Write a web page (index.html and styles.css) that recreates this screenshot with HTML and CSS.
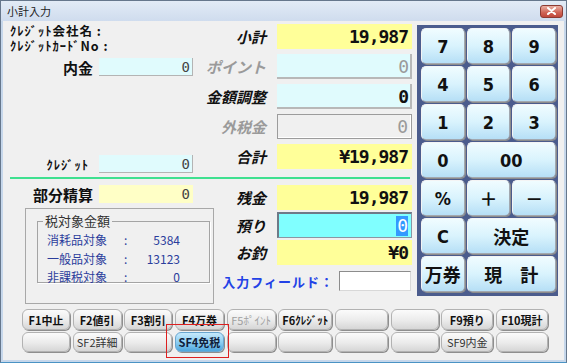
FILE: index.html
```html
<!DOCTYPE html>
<html lang="ja">

<head>
    <meta charset="UTF-8">
    <title>小計入力</title>
    <link rel="stylesheet" href="styles.css">
</head>

<body>
    <div class="window">
        <div class="titlebar">
            <span class="title">小計入力</span>
            <span class="close">
                <svg width="11" height="8" viewBox="0 0 11 8">
                    <path d="M2 1 L9 7 M9 1 L2 7" stroke="#fff" stroke-width="2" stroke-linecap="round" />
                </svg>
            </span>
        </div>

        <div class="client">
            <div class="main">
                <div class="entry">
                    <!-- upper part: subtotal side -->
                    <div class="upper">
                        <div class="left-col">
                            <div class="credit-info">
                                <div>ｸﾚｼﾞｯﾄ会社名 :</div>
                                <div>ｸﾚｼﾞｯﾄｶｰﾄﾞNo :</div>
                            </div>
                            <div class="lrow">
                                <span class="llabel">内金</span>
                                <span class="lfield cyan">0</span>
                            </div>
                            <div class="lrow push-down">
                                <span class="llabel small">ｸﾚｼﾞｯﾄ</span>
                                <span class="lfield cyan">0</span>
                            </div>
                        </div>
                        <div class="right-col">
                            <div class="row">
                                <span class="label">小計</span>
                                <span class="field yellow">19,987</span>
                            </div>
                            <div class="row">
                                <span class="label dim">ポイント</span>
                                <span class="field cyan dim-val">0</span>
                            </div>
                            <div class="row">
                                <span class="label">金額調整</span>
                                <span class="field cyan">0</span>
                            </div>
                            <div class="row">
                                <span class="label dim">外税金</span>
                                <span class="field sunken dim-val">0</span>
                            </div>
                            <div class="row">
                                <span class="label">合計</span>
                                <span class="field yellow">¥19,987</span>
                            </div>
                        </div>
                    </div>

                    <div class="rule"></div>

                    <!-- lower part: payment side -->
                    <div class="lower">
                        <div class="left-col">
                            <div class="lrow">
                                <span class="llabel">部分精算</span>
                                <span class="lfield pale">0</span>
                            </div>
                            <div class="tax-panel">
                                <fieldset class="tax-box">
                                    <legend>税対象金額</legend>
                                    <div class="tax-row"><span>消耗品対象</span><span>:</span><span class="num">5384</span></div>
                                    <div class="tax-row"><span>一般品対象</span><span>:</span><span class="num">13123</span></div>
                                    <div class="tax-row"><span>非課税対象</span><span>:</span><span class="num">0</span></div>
                                </fieldset>
                            </div>
                        </div>
                        <div class="right-col pay">
                            <div class="row">
                                <span class="label">残金</span>
                                <span class="field yellow">19,987</span>
                            </div>
                            <div class="row tall">
                                <span class="label">預り</span>
                                <span class="field deposit"><span class="selected">0</span></span>
                            </div>
                            <div class="row">
                                <span class="label">お釣</span>
                                <span class="field yellow">¥0</span>
                            </div>
                            <div class="input-row">
                                <span class="input-label">入力フィールド：</span>
                                <input type="text" class="input-field">
                            </div>
                        </div>
                    </div>
                </div>

                <div class="keypad">
                    <button class="key">7</button>
                    <button class="key">8</button>
                    <button class="key">9</button>
                    <button class="key">4</button>
                    <button class="key">5</button>
                    <button class="key">6</button>
                    <button class="key">1</button>
                    <button class="key">2</button>
                    <button class="key">3</button>
                    <button class="key">0</button>
                    <button class="key wide">00</button>
                    <button class="key">%</button>
                    <button class="key">＋</button>
                    <button class="key">－</button>
                    <button class="key">C</button>
                    <button class="key wide">決定</button>
                    <button class="key">万券</button>
                    <button class="key wide">現　計</button>
                </div>
            </div>

            <div class="fkeys">
                <button class="fkey">F1中止</button>
                <button class="fkey">F2値引</button>
                <button class="fkey">F3割引</button>
                <button class="fkey">F4万券</button>
                <button class="fkey off">F5ﾎﾟｲﾝﾄ</button>
                <button class="fkey">F6ｸﾚｼﾞｯﾄ</button>
                <button class="fkey"></button>
                <button class="fkey"></button>
                <button class="fkey">F9預り</button>
                <button class="fkey">F10現計</button>

                <button class="fkey"></button>
                <button class="fkey light">SF2詳細</button>
                <button class="fkey"></button>
                <button class="fkey active">SF4免税</button>
                <button class="fkey"></button>
                <button class="fkey"></button>
                <button class="fkey"></button>
                <button class="fkey"></button>
                <button class="fkey light">SF9内金</button>
                <button class="fkey"></button>

                <div class="highlight"></div>
            </div>
        </div>
    </div>
</body>

</html>
```

FILE: styles.css
```css
/* window frame */
body {
    margin: 0;
    font-family: "Noto Sans CJK JP", sans-serif;
    background-color: #fff;
}

.window {
    width: 567px;
    height: 363px;
    box-sizing: border-box;
    border: 1px solid #66778c;
    border-bottom-color: #4a93c4;
    background-color: #c6d7eb;
    padding: 0 2px 2px;
    display: flex;
    flex-direction: column;
}

.titlebar {
    height: 20px;
    margin: 0 -2px;
    padding: 0 3px 0 6px;
    display: flex;
    align-items: center;
    background: linear-gradient(#e2ebf6, #cfdcee);
}

.title {
    font-size: 11px;
    color: #1e1e1e;
}

.close {
    margin-left: auto;
    width: 21px;
    height: 11px;
    border: 1px solid #8c3b33;
    border-radius: 3px;
    background: linear-gradient(#eab0a4, #cf6355 60%, #c0483c);
    display: flex;
    align-items: center;
    justify-content: center;
}

.client {
    flex: 1;
    background-color: #f0f0f0;
    padding: 3px 0 0 7px;
}

.main {
    display: flex;
}

.entry {
    width: 402px;
}

/* upper / lower grids */
.upper {
    display: grid;
    grid-template-columns: 190px 212px;
    height: 149px;
}

.lower {
    display: grid;
    grid-template-columns: 204px 198px;
}

.left-col {
    display: flex;
    flex-direction: column;
}

.credit-info {
    font-size: 12.5px;
    font-weight: bold;
    letter-spacing: 1px;
    line-height: 15px;
    margin-top: -1px;
    color: #111;
}

.lrow {
    display: flex;
    align-items: center;
    height: 18px;
    margin-top: 5px;
}

.lower .lrow {
    margin-top: 0;
}

.push-down {
    margin-top: auto;
}

.llabel {
    width: 83px;
    text-align: right;
    font-size: 15px;
    font-weight: bold;
    color: #111;
}

.llabel.small {
    font-size: 12.5px;
    letter-spacing: 1px;
    padding-right: 4px;
    box-sizing: border-box;
}

.lfield {
    margin-left: 6px;
    width: 94px;
    height: 18px;
    box-sizing: border-box;
    padding-right: 3px;
    text-align: right;
    font-family: "DejaVu Sans Mono", monospace;
    font-size: 14px;
    line-height: 18px;
    color: #444;
}

.lfield.cyan {
    box-shadow: inset -1px -1px 0 #b4b4b4;
}

.right-col {
    display: flex;
    flex-direction: column;
    gap: 5px;
}

.right-col.pay {
    gap: 2px;
}

.row {
    display: grid;
    grid-template-columns: 1fr 135px;
    column-gap: 11px;
    height: 25px;
}

.row.tall {
    height: 26px;
}

.label {
    display: flex;
    align-items: center;
    justify-content: flex-end;
    font-size: 15px;
    font-weight: bold;
    font-style: italic;
    color: #111;
    white-space: nowrap;
}

.label.dim {
    color: #9a9a9a;
}

.field {
    display: flex;
    align-items: center;
    justify-content: flex-end;
    box-sizing: border-box;
    padding-right: 4px;
    font-family: "DejaVu Sans Mono", monospace;
    font-weight: bold;
    font-size: 18px;
    letter-spacing: -1px;
    color: #111;
}

.yellow {
    background-color: #ffff99;
}

.cyan {
    background-color: #e0fbfd;
}

.pale {
    background-color: #ffffc6;
}

.field.cyan {
    box-shadow: inset -2px -2px 0 #b8b8b8;
}

.sunken {
    background-color: #f0f0f0;
    border: 1px solid #9c9c9c;
    box-shadow: inset -1px -1px 0 #fff;
}

.dim-val {
    color: #9a9a9a;
    font-weight: normal;
}

.deposit {
    background-color: #80ffff;
    border: 1px solid #8a96a4;
    border-top: 2px solid #6e7a88;
    border-left: 2px solid #6e7a88;
    padding-right: 3px;
}

.selected {
    background-color: #3399ff;
    color: #fff;
    font-weight: normal;
    padding: 0 1px;
    line-height: 20px;
}

.rule {
    height: 2px;
    margin: 4px 2px 6px 0;
    background-color: #3fe090;
}

/* tax box */
.tax-panel {
    margin: 5px 0 0 15px;
    width: 189px;
    height: 96px;
    box-sizing: border-box;
    border: 1px solid #a8a8a8;
    padding: 5px 3px 0 11px;
}

.tax-box {
    margin: 0;
    padding: 3px 0 0 9px;
    height: 69px;
    box-sizing: border-box;
    border: 1px solid #a4a4a4;
    box-shadow: 1px 1px 0 #fff;
}

.tax-box legend {
    margin-left: -4px;
    padding: 0 2px;
    font-size: 13px;
    line-height: 14px;
    color: #333;
}

.tax-row {
    display: grid;
    grid-template-columns: 77px 10px 46px;
    font-size: 12px;
    line-height: 18.5px;
    color: #2b3d9c;
}

.tax-row .num {
    text-align: right;
}

.input-row {
    display: flex;
    justify-content: flex-end;
    align-items: center;
    margin-top: 4px;
    margin-right: 1px;
    height: 20px;
}

.input-label {
    font-size: 13px;
    font-weight: bold;
    letter-spacing: 1px;
    color: #2342e6;
}

.input-field {
    margin: 0 0 0 5px;
    width: 72px;
    height: 20px;
    box-sizing: border-box;
    padding: 0;
    border: 1px solid #8c8c8c;
    border-right-color: #d8d8d8;
    border-bottom-color: #d8d8d8;
    background-color: #fff;
}

/* keypad */
.keypad {
    margin: 1px 0 0 5px;
    width: 141px;
    height: 271px;
    box-sizing: border-box;
    padding: 3px 2px 4px 4px;
    background-color: #4b5c8d;
    display: grid;
    grid-template-columns: repeat(3, 1fr);
    grid-template-rows: repeat(7, 1fr);
    gap: 2px;
}

.key {
    margin: 0;
    padding: 0;
    border: 1px solid #a2a8b0;
    border-top-color: #f4f4f4;
    border-left-color: #f4f4f4;
    border-radius: 5px;
    background: linear-gradient(#f0fcff, #d9f3fd 50%, #b6dff6);
    box-shadow: 1px 1px 0 #8c8c8c;
    font-family: "DejaVu Sans", "Noto Sans CJK JP", sans-serif;
    font-stretch: condensed;
    font-size: 18px;
    font-weight: bold;
    color: #111;
}

.key.wide {
    grid-column: span 2;
}

/* function keys */
.fkeys {
    position: relative;
    margin: 5px 0 0 12px;
    width: 526px;
    display: grid;
    grid-template-columns: 48px 49px 48px 49px 49px 54px 53px 48px 52px 52px;
    grid-template-rows: 21px 20px;
    column-gap: 2.67px;
    row-gap: 2px;
}

.fkey {
    margin: 0;
    padding: 0;
    border: 1px solid #b2b2b2;
    border-radius: 6px;
    background: linear-gradient(#fbfbfb, #ebebeb 55%, #d6d6d6);
    box-shadow: 1px 1px 0 #8e8e8e;
    font-family: "Noto Sans CJK JP", sans-serif;
    font-size: 11px;
    font-weight: bold;
    color: #111;
    white-space: nowrap;
}

.fkey.off {
    color: #a0a0a0;
    font-weight: normal;
}

.fkey.light {
    color: #333;
    font-weight: normal;
}

.fkey.active {
    border-color: #6aa6cf;
    background: linear-gradient(#c6e9fc, #8fd0f3 50%, #4ea6dd);
    color: #10203a;
}

/* red marker around SF4 */
.highlight {
    position: absolute;
    left: 144px;
    top: 15px;
    width: 63px;
    height: 34px;
    box-sizing: border-box;
    border: 1.5px solid #dd2020;
}
```
